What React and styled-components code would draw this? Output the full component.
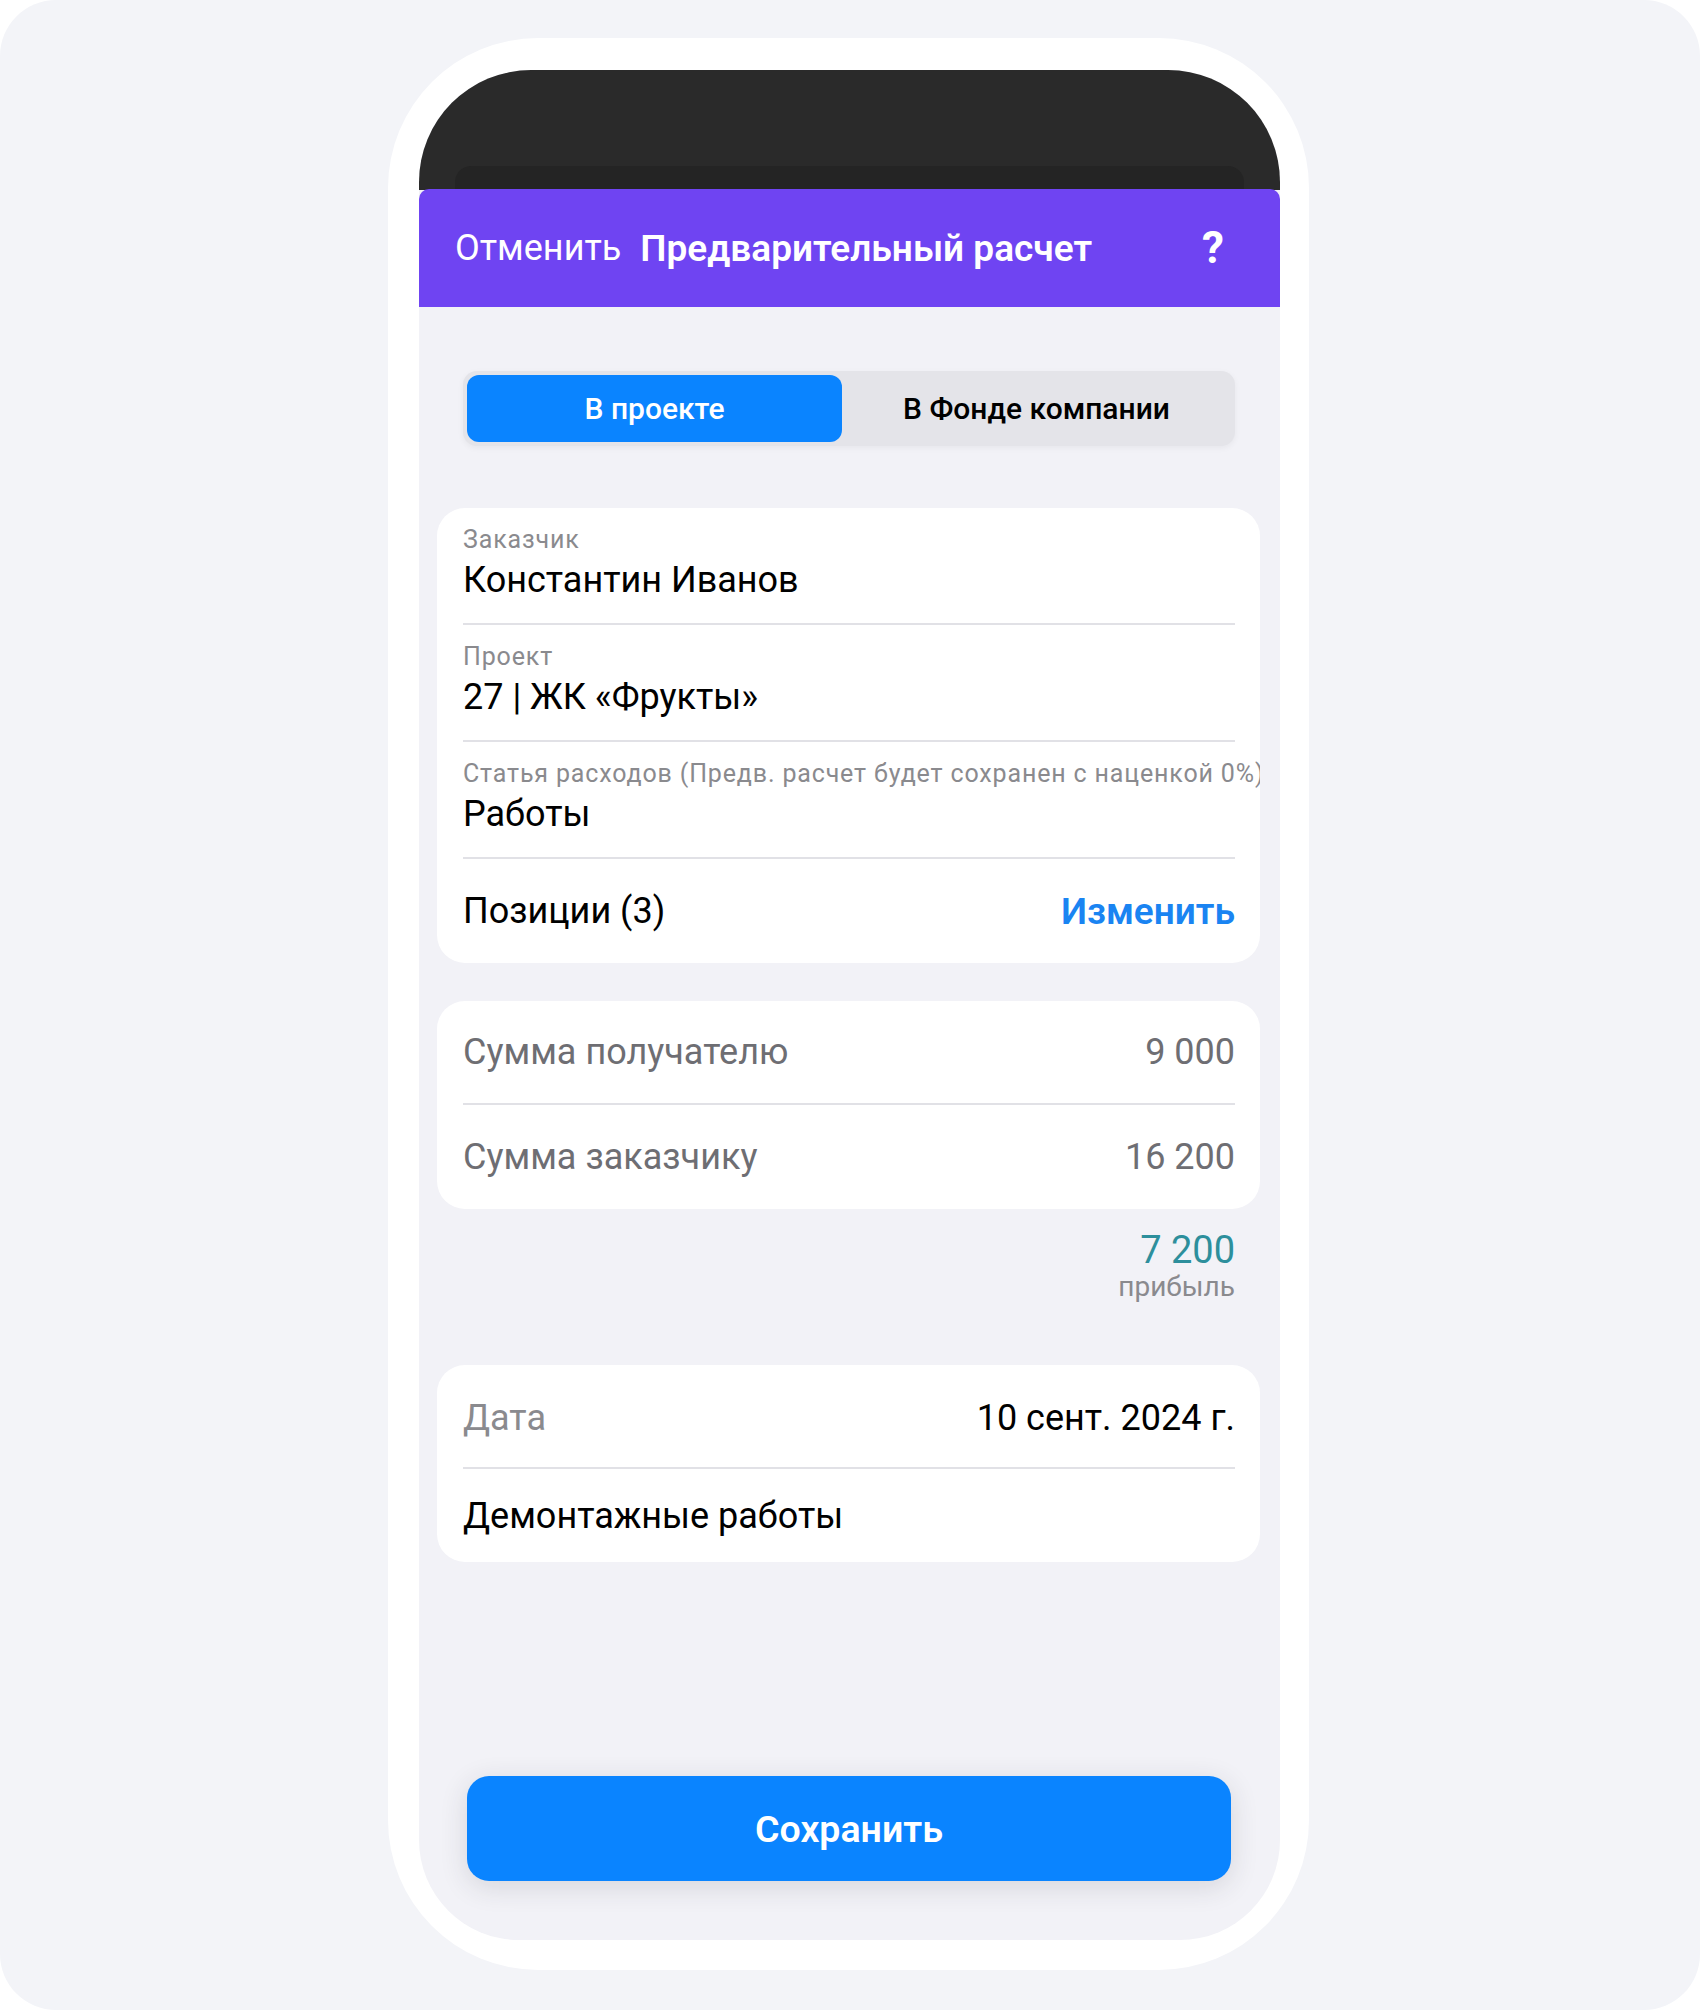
import React from "react";
import styled, { createGlobalStyle } from "styled-components";

const GlobalStyle = createGlobalStyle`
  html, body { margin: 0; padding: 0; background: #ffffff; }
  body { font-family: Roboto, "Noto Sans", "Liberation Sans", sans-serif; -webkit-font-smoothing: antialiased; }
  * { box-sizing: border-box; }
`;

const Backdrop = styled.div`
  width: 1700px;
  height: 2010px;
  background: #f3f4f8;
  border-radius: 56px;
  display: flex;
  padding: 38px 0 0 388px;
`;

const Phone = styled.div`
  width: 921px;
  height: 1932px;
  background: #ffffff;
  border-radius: 150px;
  padding: 32px 29px 30px 31px;
  display: flex;
`;

const Screen = styled.div`
  flex: 1;
  background: #f2f2f7;
  border-radius: 112px 112px 100px 100px;
  overflow: hidden;
  display: flex;
  flex-direction: column;
`;

const TopArea = styled.div`
  height: 120px;
  background: #2a2a2a;
  display: flex;
  flex-direction: column;
  justify-content: flex-end;
  padding: 0 36px;
`;

const BackSheet = styled.div`
  height: 24px;
  background: #242424;
  border-radius: 16px 16px 0 0;
`;

const Header = styled.header`
  height: 118px;
  background: #6f44f2;
  border-radius: 10px 10px 0 0;
  margin-top: -1px;
  display: flex;
  align-items: center;
  padding: 0 56px 0 36px;
  color: #ffffff;
  font-size: 36px;
`;

const Cancel = styled.span`
  font-weight: 400;
  margin-right: 19px;
`;

const Title = styled.span`
  font-weight: 600;
  font-size: 37px;
`;

const Help = styled.span`
  margin-left: auto;
  font-weight: 700;
  font-size: 44px;
`;

const Content = styled.main`
  flex: 1;
  display: flex;
  flex-direction: column;
  padding: 64px 20px 59px 18px;
`;

const Segmented = styled.div`
  margin: 0 25px 0 26px;
  height: 75px;
  background: #e4e4e9;
  border-radius: 14px;
  padding: 4px;
  display: flex;
  box-shadow: 0 2px 6px rgba(0, 0, 0, 0.05);
`;

const Segment = styled.div`
  flex: ${(p) => (p.$active ? "0 0 375px" : "1")};
  display: flex;
  align-items: center;
  justify-content: center;
  border-radius: 12px;
  font-size: 30px;
  font-weight: 500;
  background: ${(p) => (p.$active ? "#0a84ff" : "transparent")};
  color: ${(p) => (p.$active ? "#ffffff" : "#000000")};
`;

const Card = styled.section`
  background: #ffffff;
  border-radius: 28px;
  margin-top: ${(p) => p.$mt}px;
  padding: 0 25px 0 26px;
  overflow: hidden;
`;

const Field = styled.div`
  padding: 17px 0 21px;
  border-bottom: 2px solid #e1e1e6;
  display: flex;
  flex-direction: column;
  gap: 3px;
`;

const FieldLabel = styled.div`
  font-size: 25px;
  line-height: 30px;
  letter-spacing: 0.85px;
  color: #8a8a8e;
  white-space: nowrap;
  margin-right: -25px;
`;

const FieldValue = styled.div`
  font-size: 36px;
  line-height: 44px;
  color: #000000;
`;

const Row = styled.div`
  height: ${(p) => p.$h}px;
  display: flex;
  align-items: center;
  justify-content: space-between;
  font-size: 36px;
  padding-top: ${(p) => p.$pt || 0}px;
  border-bottom: ${(p) => (p.$sep ? "2px solid #e1e1e6" : "none")};
`;

const RowText = styled.span`
  color: ${(p) => p.$color || "#000000"};
  font-weight: ${(p) => p.$weight || 400};
  font-size: ${(p) => p.$size || 36}px;
`;

const Profit = styled.div`
  margin: 19px 25px 0 0;
  display: flex;
  flex-direction: column;
  align-items: flex-end;
`;

const ProfitValue = styled.div`
  font-size: 38px;
  line-height: 44px;
  color: #2d8f9c;
`;

const ProfitLabel = styled.div`
  font-size: 28px;
  line-height: 30px;
  color: #8a8a8e;
`;

const SaveButton = styled.button`
  margin: auto 29px 0 30px;
  height: 105px;
  border: none;
  border-radius: 22px;
  background: #0a84ff;
  color: #ffffff;
  font-family: inherit;
  font-size: 37.5px;
  font-weight: 600;
  box-shadow: 0 6px 28px rgba(40, 40, 60, 0.14);
`;

export default function App() {
  return (
    <>
      <GlobalStyle />
      <Backdrop>
        <Phone>
          <Screen>
            <TopArea>
              <BackSheet />
            </TopArea>
            <Header>
              <Cancel>Отменить</Cancel>
              <Title>Предварительный расчет</Title>
              <Help>?</Help>
            </Header>
            <Content>
              <Segmented>
                <Segment $active>В проекте</Segment>
                <Segment>В Фонде компании</Segment>
              </Segmented>

              <Card $mt={62}>
                <Field>
                  <FieldLabel>Заказчик</FieldLabel>
                  <FieldValue>Константин Иванов</FieldValue>
                </Field>
                <Field>
                  <FieldLabel>Проект</FieldLabel>
                  <FieldValue>27 | ЖК «Фрукты»</FieldValue>
                </Field>
                <Field>
                  <FieldLabel>Статья расходов (Предв. расчет будет сохранен с наценкой 0%)</FieldLabel>
                  <FieldValue>Работы</FieldValue>
                </Field>
                <Row $h={104}>
                  <RowText>Позиции (3)</RowText>
                  <RowText $color="#1a84f2" $weight={600} $size={37}>Изменить</RowText>
                </Row>
              </Card>

              <Card $mt={38}>
                <Row $h={104} $sep>
                  <RowText $color="#6e6e73">Сумма получателю</RowText>
                  <RowText $color="#6e6e73">9 000</RowText>
                </Row>
                <Row $h={104}>
                  <RowText $color="#6e6e73">Сумма заказчику</RowText>
                  <RowText $color="#6e6e73">16 200</RowText>
                </Row>
              </Card>

              <Profit>
                <ProfitValue>7 200</ProfitValue>
                <ProfitLabel>прибыль</ProfitLabel>
              </Profit>

              <Card $mt={63}>
                <Row $h={104} $pt={4} $sep>
                  <RowText $color="#8a8a8e">Дата</RowText>
                  <RowText>10 сент. 2024 г.</RowText>
                </Row>
                <Row $h={93}>
                  <RowText>Демонтажные работы</RowText>
                </Row>
              </Card>

              <SaveButton>Сохранить</SaveButton>
            </Content>
          </Screen>
        </Phone>
      </Backdrop>
    </>
  );
}
